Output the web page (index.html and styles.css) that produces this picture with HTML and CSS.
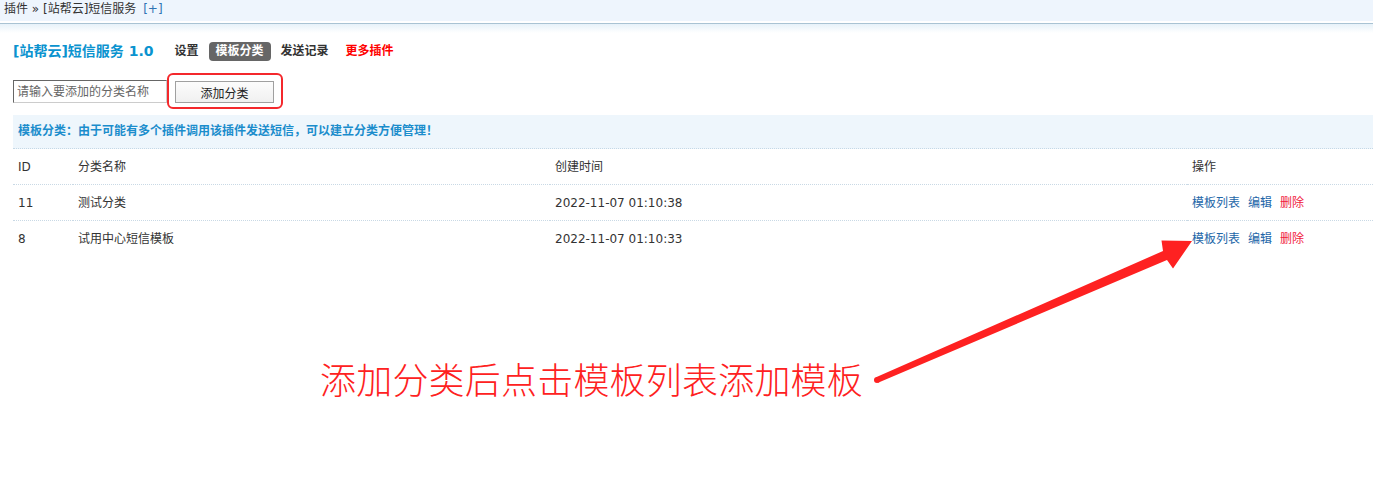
FILE: index.html
```html
<!DOCTYPE html>
<html>
  <head>
    <meta charset="utf-8">
    <title>站帮云短信服务</title>
    <link rel="stylesheet" href="styles.css">
  </head>
  <body>
    <div class="topbar">
      <div class="crumb">插件 &raquo; [站帮云]短信服务 <a class="add-link" href="#">[+]</a></div>
    </div>
    <div class="topline"></div>

    <div class="content">
      <div class="itemtitle">
        <h3>[站帮云]短信服务 1.0</h3>
        <ul class="tabs">
          <li><a href="#">设置</a></li>
          <li class="current"><a href="#">模板分类</a></li>
          <li><a href="#">发送记录</a></li>
          <li><a class="more" href="#">更多插件</a></li>
        </ul>
      </div>

      <form class="add-form">
        <input type="text" class="txt" placeholder="请输入要添加的分类名称" />
        <span class="btn-wrap">
          <button type="button" class="btn">添加分类</button>
          <!-- red marker drawn over the screenshot -->
          <span class="highlight"></span>
        </span>
      </form>

      <div class="tips">模板分类：由于可能有多个插件调用该插件发送短信，可以建立分类方便管理！</div>

      <table class="tb">
        <colgroup>
          <col class="col-id">
          <col class="col-name">
          <col class="col-time">
          <col class="col-op">
        </colgroup>
        <tr class="header">
          <th>ID</th>
          <th>分类名称</th>
          <th>创建时间</th>
          <th>操作</th>
        </tr>
        <tr>
          <td>11</td>
          <td>测试分类</td>
          <td>2022-11-07 01:10:38</td>
          <td class="ops"><a href="#">模板列表</a><a href="#">编辑</a><a class="del" href="#">删除</a></td>
        </tr>
        <tr>
          <td>8</td>
          <td>试用中心短信模板</td>
          <td>2022-11-07 01:10:33</td>
          <td class="ops"><a href="#">模板列表</a><a href="#">编辑</a><a class="del" href="#">删除</a></td>
        </tr>
      </table>
    </div>

    <!-- annotation layer -->
    <div class="note">添加分类后点击模板列表添加模板</div>
    <svg class="arrow" width="1373" height="478" viewBox="0 0 1373 478">
      <circle cx="877" cy="380" r="3" fill="#fe2121" />
      <polygon fill="#fe2121"
        points="876,377.3 1163,251 1161.5,240.5 1192,241 1173,268.5 1167,260 878,382.7" />
    </svg>
  </body>
</html>
```

FILE: styles.css
```css
html {
  height: 100%;
}

body {
  margin: 0;
  min-height: 478px;
  font: 12px/1.5 "DejaVu Sans", "Noto Sans CJK SC", sans-serif;
  color: #333;
  background: #fff;
  position: relative;
}

a {
  text-decoration: none;
  color: #2366a8;
}

/* breadcrumb bar */
.topbar {
  height: 21px;
  background-color: #eef5fd;
  border-bottom: 2px solid #fff;
}

.crumb {
  padding: 0 4px;
  line-height: 18px;
  color: #333;
}

.add-link {
  margin-left: 3px;
  color: #2f73b3;
}

.topline {
  height: 9px;
  border-top: 1px solid #a9c3d3;
  background: linear-gradient(#e7f2f9, #fff);
}

.content {
  padding-left: 13px;
}

/* title and tabs */
.itemtitle {
  display: flex;
  align-items: center;
  margin-top: 8px;
  height: 20px;
}

.itemtitle h3 {
  margin: 0 14px 0 0;
  font-size: 14px;
  font-weight: bold;
  color: #0a93cf;
}

.tabs {
  display: flex;
  gap: 3px;
  list-style-type: none;
  margin: 0;
  padding: 0;
}

.tabs a {
  display: block;
  padding: 0 7px;
  height: 19px;
  line-height: 19px;
  border-radius: 4px;
  font-weight: bold;
  color: #333;
}

.tabs .current a {
  background-color: #666;
  color: #fff;
}

.tabs .more {
  color: #f00;
}

/* add form */
.add-form {
  display: flex;
  align-items: flex-start;
  gap: 8px;
  margin: 19px 0 0;
}

.txt {
  box-sizing: border-box;
  width: 154px;
  height: 23px;
  padding: 0 3px;
  border: 1px solid;
  border-color: #666 #ccc #ccc #666;
  font: 12px "DejaVu Sans", "Noto Sans CJK SC", sans-serif;
  color: #333;
}

.txt::placeholder {
  color: #666;
}

.btn-wrap {
  position: relative;
  display: block;
  margin-top: 1px;
}

.btn {
  display: block;
  box-sizing: border-box;
  width: 99px;
  height: 22px;
  padding: 0;
  border: 1px solid #a0a0a0;
  background: linear-gradient(#fcfcfc, #f0f0f0);
  font: 12px "DejaVu Sans", "Noto Sans CJK SC", sans-serif;
  color: #222;
}

.highlight {
  position: absolute;
  left: -8px;
  top: -8px;
  right: -9px;
  bottom: -6px;
  border: 2px solid #f4282c;
  border-radius: 6px;
}

/* tip bar */
.tips {
  margin-top: 12px;
  height: 33px;
  line-height: 33px;
  padding-left: 5px;
  background-color: #eef6fc;
  border-bottom: 1px dotted #c5d8e6;
  font-weight: bold;
  color: #1b8dcc;
}

/* table */
.tb {
  width: 1360px;
  table-layout: fixed;
  border-collapse: collapse;
}

.col-id { width: 60px; }
.col-name { width: 477px; }
.col-time { width: 637px; }
.col-op { width: 186px; }

.tb th,
.tb td {
  padding: 9px 5px 8px;
  line-height: 18px;
  text-align: left;
  font-weight: normal;
  color: #333;
  border-bottom: 1px dotted #c9d9e5;
}

.tb tr:last-child td {
  border-bottom: none;
}

.ops a {
  margin-right: 8px;
  color: #2366a8;
}

.ops .del {
  color: #f0203c;
}

/* annotation */
.note {
  position: absolute;
  left: 320px;
  top: 358px;
  font: 300 36px/40px "Noto Sans CJK SC", sans-serif;
  letter-spacing: 0.2px;
  color: #fe2121;
  white-space: nowrap;
}

.arrow {
  position: absolute;
  left: 0;
  top: 0;
  pointer-events: none;
}
```
